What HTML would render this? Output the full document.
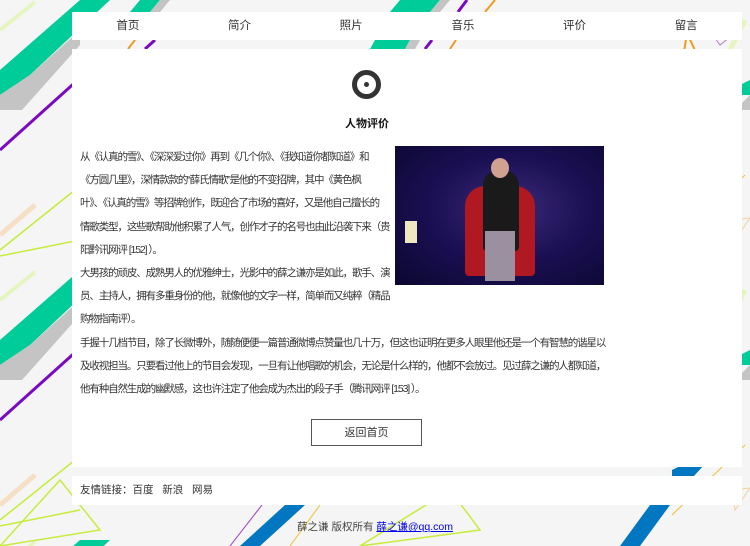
<!DOCTYPE html>
<html><head><meta charset="utf-8"><style>
*{margin:0;padding:0;box-sizing:border-box}
body{width:750px;height:546px;overflow:hidden;background:#f5f5f5;font-family:"Liberation Sans","Noto Sans CJK SC",sans-serif;font-size:12px;color:#333;position:relative}
#bg{position:absolute;left:0;top:0}
.box{position:absolute;background:#fff;left:72px;width:670px}
.nav{top:12px;height:28px;display:flex}
.nav span{flex:1;text-align:center;line-height:28px;font-size:11.5px;color:#333}
.main{top:49px;height:418px}
.icon{position:absolute;left:280px;top:21px;width:29px;height:29px;border-radius:50%;border:5px solid #333}
.icon:after{content:"";position:absolute;left:7px;top:7px;width:5px;height:5px;border-radius:50%;background:#333}
h3{position:absolute;left:0;width:590px;text-align:center;top:66px;font-size:11px;font-weight:bold;color:#111}
.txt{position:absolute;left:8px;top:97px;width:530px;line-height:23.2px;font-size:10.5px;letter-spacing:-1.12px;color:#333;white-space:nowrap}
.img{position:absolute;left:315px;top:0;width:209px;height:139px;background:radial-gradient(ellipse at 55% 45%,#3a2a78,#1a0f52 50%,#0b0730 100%);overflow:hidden}
.btn{position:absolute;left:239px;top:370px;width:111px;height:27px;border:1px solid #555;text-align:center;line-height:26px;font-size:11px}
.links{top:476px;height:29px;line-height:29px;padding-left:8px;font-size:10.5px}
.copy{position:absolute;top:519px;left:0;width:750px;text-align:center;font-size:10.5px;color:#444}
.copy a{color:#00e;text-decoration:underline}
</style></head><body>
<svg id="bg" width="750" height="546">
<defs><pattern id="p" width="750" height="270" patternUnits="userSpaceOnUse">
<polygon points="0,70 80,0 110,0 30,75 0,95" fill="#00cc99"/>
<polygon points="0,95 30,75 80,30 80,45 22,110 0,110" fill="#c4c4c4"/>
<line x1="80" y1="78" x2="0" y2="150" stroke="#7a0ac0" stroke-width="3"/>
<line x1="80" y1="186" x2="0" y2="250" stroke="#c6ec3c" stroke-width="1.5"/>
<line x1="80" y1="240" x2="0" y2="256" stroke="#c6ec3c" stroke-width="1.5"/>
<line x1="35" y1="205" x2="0" y2="235" stroke="#f5dfc5" stroke-width="5"/>
<line x1="35" y1="2" x2="0" y2="30" stroke="#e5f5c0" stroke-width="4"/>
<polygon points="687,33 735,137 672,128" fill="none" stroke="#ec9a20" stroke-width="2"/>
<polygon points="705,24 742,25 735,33 720,45" fill="none" stroke="#b080c8" stroke-width="1"/>
<polygon points="740,85 750,80 750,95 740,95" fill="#00cc99"/>
<polygon points="735,110 750,95 750,110" fill="#c4c4c4"/>
<line x1="745" y1="20" x2="725" y2="60" stroke="#e5f5c0" stroke-width="5"/>
<polygon points="672,200 707,183 715,183 672,230" fill="#0077c0"/>
<line x1="745" y1="175" x2="672" y2="245" stroke="#f0c030" stroke-width="1"/>
<polygon points="732,220 750,218 735,240" fill="none" stroke="#f0d0a0" stroke-width="1"/>
<polygon points="672,163 685,157 672,170" fill="#f0c030"/>
</pattern></defs>
<rect width="750" height="546" fill="url(#p)"/>
<g>
<polygon points="140,0 160,0 150,12 130,12" fill="#00cc99"/><polygon points="160,0 170,0 160,12 150,12" fill="#c4c4c4"/>
<line x1="145" y1="49" x2="155" y2="40" stroke="#7a0ac0" stroke-width="3"/>
<line x1="128" y1="49" x2="135" y2="40" stroke="#ec9a20" stroke-width="2"/>
<polygon points="400,0 440,0 430,12 390,12" fill="#00cc99"/><polygon points="440,0 450,0 440,12 430,12" fill="#c4c4c4"/>
<line x1="458" y1="12" x2="467" y2="0" stroke="#7a0ac0" stroke-width="3"/>
<line x1="485" y1="12" x2="495" y2="0" stroke="#ec9a20" stroke-width="2"/>
<polygon points="370,49 405,49 410,40 375,40" fill="#00cc99"/><polygon points="405,49 415,49 420,40 410,40" fill="#c4c4c4"/>
<line x1="425" y1="49" x2="432" y2="40" stroke="#7a0ac0" stroke-width="3"/>
<line x1="450" y1="49" x2="456" y2="40" stroke="#ec9a20" stroke-width="2"/>
<polygon points="240,546 260,546 305,505 285,505" fill="#0077c0"/>
<line x1="230" y1="546" x2="262" y2="505" stroke="#9a40c0" stroke-width="1"/>
<line x1="290" y1="546" x2="320" y2="505" stroke="#f0c030" stroke-width="1"/>
<polygon points="620,546 640,546 670,505 650,505" fill="#0077c0"/>
<polygon points="0,546 100,530 60,480" fill="none" stroke="#c6ec3c" stroke-width="1.5"/>
<polygon points="360,546 480,530 450,490" fill="none" stroke="#c6ec3c" stroke-width="1.5"/>
</g>
</svg>
<div class="box nav"><span>首页</span><span>简介</span><span>照片</span><span>音乐</span><span>评价</span><span>留言</span></div>
<div class="box main">
<div class="icon"></div>
<h3>人物评价</h3>
<div class="txt"><div class="img"><div style="position:absolute;left:70px;top:40px;width:70px;height:90px;background:#b01822;border-radius:20px 20px 4px 4px"></div><div style="position:absolute;left:88px;top:25px;width:36px;height:80px;background:#1a1a1a;border-radius:14px 14px 4px 4px"></div><div style="position:absolute;left:96px;top:12px;width:18px;height:20px;background:#d0a090;border-radius:50%"></div><div style="position:absolute;left:90px;top:85px;width:30px;height:50px;background:#9a90a0"></div><div style="position:absolute;left:10px;top:75px;width:12px;height:22px;background:#f0e8c0"></div></div>从《认真的雪》、《深深爱过你》再到《几个你》、《我知道你都知道》和<br>《方圆几里》，深情款款的“薛氏情歌”是他的不变招牌，其中《黄色枫<br>叶》、《认真的雪》等招牌创作，既迎合了市场的喜好，又是他自己擅长的<br>情歌类型，这些歌帮助他积累了人气，创作才子的名号也由此沿袭下来（贵<br>阳黔讯网评 [152] ）。<br>大男孩的顽皮、成熟男人的优雅绅士，光影中的薛之谦亦是如此，歌手、演<br>员、主持人，拥有多重身份的他，就像他的文字一样，简单而又纯粹（精品<br>购物指南评）。<br>手握十几档节目，除了长微博外，随随便便一篇普通微博点赞量也几十万，但这也证明在更多人眼里他还是一个有智慧的谐星以<br>及收视担当。只要看过他上的节目会发现，一旦有让他唱歌的机会，无论是什么样的，他都不会放过。见过薛之谦的人都知道，<br>他有种自然生成的幽默感，这也许注定了他会成为杰出的段子手（腾讯网评 [153] ）。</div>
<div class="btn">返回首页</div>
</div>
<div class="box links">友情链接：百度&nbsp;&nbsp;&nbsp;新浪&nbsp;&nbsp;&nbsp;网易</div>
<div class="copy">薛之谦 版权所有 <a>薛之谦@qq.com</a></div>
</body></html>
